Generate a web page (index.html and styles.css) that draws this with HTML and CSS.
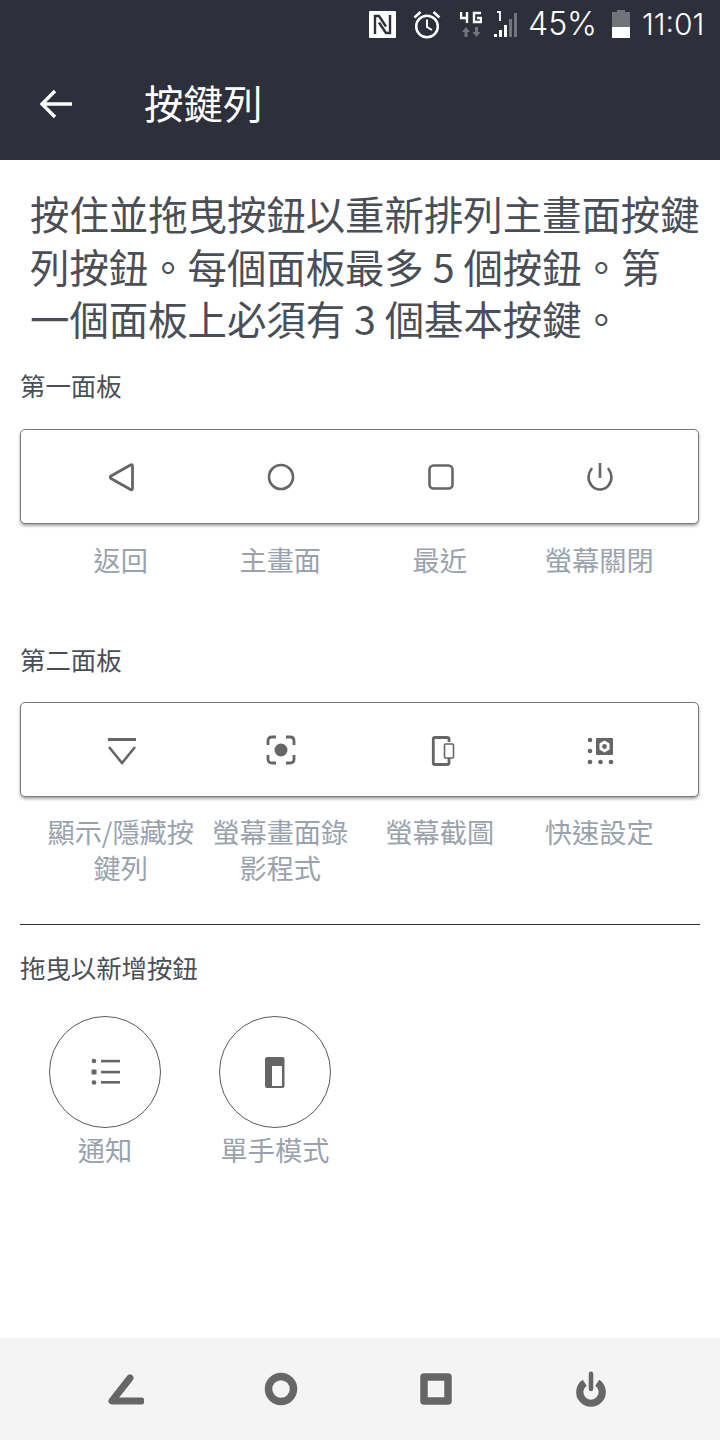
FILE: index.html
```html
<!DOCTYPE html>
<html lang="zh-Hant">
<head>
<meta charset="utf-8">
<title>按鍵列</title>
<link rel="stylesheet" href="styles.css">
</head>
<body>
<div class="screen">
  <header class="appbar">
    <div class="status">
      <svg class="s-nfc" viewBox="0 0 27 27" fill="none" stroke="#2d303a" stroke-width="2.400"><rect width="27" height="27" rx="1" fill="#fff" stroke="none"/><path d="M6 23 V5 H10 L17 15.500"/><path d="M21 4 V22 H17 L10 11.500"/></svg>
      <svg class="s-alarm" viewBox="0 0 28 29" fill="none" stroke="#fff"><circle cx="14" cy="16.500" r="10.800" stroke-width="2.500"/><path d="M14 9.500 V17 L19 20" stroke-width="2"/><path d="M1.500 7.500 L7.500 2 M26.500 7.500 L20.500 2" stroke-width="2.500"/></svg>
      <svg class="s-net" viewBox="0 0 22 27"><path d="M1 1 V7 H7 M7 1 V12 M21 2 H14 V11 H21 V7 H17" fill="none" stroke="#fff" stroke-width="2.400"/><path d="M6 16 L10 21 H7.500 V26 H4.500 V21 H2 Z M16.500 26 L12.500 21 H15 V16 H18 V21 H20.500 Z" fill="#71747b"/></svg>
      <svg class="s-signal" viewBox="0 0 23 26"><path d="M3 1 H6 V10" fill="none" stroke="#fff" stroke-width="1.800"/><rect x="0" y="23" width="3" height="3" fill="#fff"/><rect x="5" y="19" width="3" height="7" fill="#fff"/><rect x="10" y="14" width="3" height="12" fill="#fff"/><rect x="15" y="8" width="3" height="18" fill="#71747b"/><rect x="20" y="2" width="3" height="24" fill="#71747b"/></svg>
      <span class="s-text s-pct">45%</span>
      <svg class="s-batt" viewBox="0 0 18 28"><path d="M5 0 H13 V2 H18 V17 H0 V2 H5 Z" fill="#71747b"/><rect y="17" width="18" height="11" fill="#fff"/></svg>
      <span class="s-text s-time">11:01</span>
    </div>
    <div class="toolbar">
      <svg class="back" viewBox="0 0 34 30" fill="none" stroke="#fff" stroke-width="3.400"><path d="M33 15 H3 M16 2 L3 15 L16 28"/></svg>
      <h1 class="title">按鍵列</h1>
    </div>
  </header>

  <main class="content">
    <p class="intro">按住並拖曳按鈕以重新排列主畫面按鍵<br>列按鈕。每個面板最多 5 個按鈕。第<br>一個面板上必須有 3 個基本按鍵。</p>

    <h2 class="section-label">第一面板</h2>
    <div class="panel">
      <svg class="icon" viewBox="0 0 32 32" fill="none" stroke="#666" stroke-width="2.800" stroke-linejoin="round"><path d="M26.500 5 Q26.500 3 24.500 4 L5 15 Q3.500 16 5 17.500 L24.500 28.500 Q26.500 29.500 26.500 27 Z"/></svg>
      <svg class="icon" viewBox="0 0 32 32" fill="none" stroke="#666" stroke-width="2.600"><circle cx="16" cy="16" r="12"/></svg>
      <svg class="icon" viewBox="0 0 32 32" fill="none" stroke="#666" stroke-width="2.600"><rect x="4.500" y="4.500" width="23" height="23" rx="4"/></svg>
      <svg class="icon" viewBox="0 0 32 32" fill="none" stroke="#666" stroke-width="2.600"><path d="M16 2 V17"/><path d="M7.500 8 A13 13 0 0 0 4.500 16 A11.500 12.500 0 0 0 16 28.500 A11.500 12.500 0 0 0 27.500 16 A13 13 0 0 0 24.500 8" stroke-linecap="round"/></svg>
    </div>
    <div class="captions">
      <span class="caption">返回</span>
      <span class="caption">主畫面</span>
      <span class="caption">最近</span>
      <span class="caption">螢幕關閉</span>
    </div>

    <h2 class="section-label second">第二面板</h2>
    <div class="panel">
      <svg class="icon" viewBox="0 0 32 32" fill="none" stroke="#666"><path d="M2 5.500 H30" stroke-width="3"/><path d="M3 13 L16 29 L29 13" stroke-width="2.600"/></svg>
      <svg class="icon" viewBox="0 0 32 32" fill="none" stroke="#666" stroke-width="2.800"><path d="M3 11 V7 Q3 3 7 3 H11 M21 3 H25 Q29 3 29 7 V11 M29 21 V25 Q29 29 25 29 H21 M11 29 H7 Q3 29 3 25 V21"/><circle cx="16" cy="16" r="6.500" fill="#666" stroke="none"/></svg>
      <svg class="icon" viewBox="0 0 32 32" fill="none" stroke="#666"><path d="M24 8 V5 Q24 3.500 22 3.500 H10 Q8.300 3.500 8.300 5 V29 Q8.300 30.500 10 30.500 H22 Q24 30.500 24 29 V24" stroke-width="2.800"/><rect x="19.500" y="10" width="9" height="14" rx="1" stroke-width="1.600"/></svg>
      <svg class="icon" viewBox="0 0 32 32"><g fill="#666"><circle cx="6" cy="6" r="2.300"/><circle cx="6" cy="17" r="2.300"/><circle cx="6" cy="28" r="2.300"/><circle cx="16.500" cy="28" r="2.300"/><circle cx="27" cy="28" r="2.300"/><rect x="12" y="4" width="17" height="17" rx="1"/></g><path fill="#fff" d="M20.500 6.500 L25.500 9.500 V15.500 L20.500 18.500 L15.500 15.500 V9.500 Z"/><circle cx="20.500" cy="12.500" r="2.400" fill="#666"/></svg>
    </div>
    <div class="captions captions-tight">
      <span class="caption">顯示/隱藏按鍵列</span>
      <span class="caption">螢幕畫面錄影程式</span>
      <span class="caption">螢幕截圖</span>
      <span class="caption">快速設定</span>
    </div>

    <hr class="divider">

    <h2 class="section-label tray-label">拖曳以新增按鈕</h2>
    <div class="tray">
      <div class="tray-item">
        <div class="circle">
          <svg class="icon" viewBox="0 0 32 32"><g fill="#666"><circle cx="5" cy="5" r="2.300"/><rect x="2.500" y="13.500" width="5" height="5"/><circle cx="5" cy="26.500" r="2.300"/><rect x="12" y="3.800" width="19" height="2.600"/><rect x="12" y="14.800" width="19" height="2.600"/><rect x="12" y="25" width="19" height="2.600"/></g></svg>
        </div>
        <span class="caption">通知</span>
      </div>
      <div class="tray-item">
        <div class="circle">
          <svg class="icon" viewBox="0 0 32 32"><path fill="#666" fill-rule="evenodd" d="M8 1 H23.500 Q25.500 1 25.500 3 V30 Q25.500 32 23.500 32 H8 Q6 32 6 30 V3 Q6 1 8 1 Z M13 10 V30 H23 V10 Z"/></svg>
        </div>
        <span class="caption">單手模式</span>
      </div>
    </div>
  </main>

  <footer class="navbar">
    <svg class="nav-icon" viewBox="0 0 36 32" fill="none" stroke="#666" stroke-width="7" stroke-linecap="round" stroke-linejoin="round"><path d="M22 5 L4 28 H33" /></svg>
    <svg class="nav-icon" viewBox="0 0 36 36" fill="none" stroke="#666" stroke-width="7.500"><circle cx="18" cy="18" r="12.500"/></svg>
    <svg class="nav-icon" viewBox="0 0 36 36" fill="none" stroke="#666" stroke-width="7.500" stroke-linejoin="round"><rect x="6" y="6" width="24" height="24"/></svg>
    <svg class="nav-icon" viewBox="0 0 36 40" fill="none" stroke="#666"><path d="M11 13 A12.500 12.500 0 1 0 25 13" stroke-width="8"/><path d="M18 3 V20" stroke-width="5" stroke-linecap="round"/></svg>
  </footer>
</div>
</body>
</html>
```
FILE: styles.css
```css
* { box-sizing: border-box; }
html, body { margin: 0; padding: 0; }
body {
  background: #fff;
  font-family: "Noto Sans CJK TC", "Noto Sans", sans-serif;
  color: #4a4f57;
}
.screen {
  width: 720px;
  height: 1440px;
  display: flex;
  flex-direction: column;
  overflow: hidden;
}
.appbar {
  height: 160px;
  background: #2d303a;
  color: #fff;
  flex: none;
}
.status {
  height: 48px;
  display: flex;
  align-items: center;
  justify-content: flex-end;
  padding-right: 15px;
}
.s-nfc { width: 27px; height: 27px; margin-right: 17px; }
.s-alarm { width: 28px; height: 29px; margin-right: 19px; }
.s-net { width: 22px; height: 27px; margin-right: 12px; }
.s-signal { width: 23px; height: 26px; margin-right: 11px; }
.s-batt { width: 18px; height: 28px; margin: 0 12px 0 16px; }
.s-text {
  font-family: "Inter", sans-serif;
  font-weight: 300;
  font-size: 30px;
  line-height: 50px;
  color: #fff;
  white-space: nowrap;
}
.s-pct { width: 68px; font-size: 32px; }
.s-time { width: 63px; }
.toolbar {
  height: 112px;
  display: flex;
  align-items: center;
  padding-left: 39px;
}
.back { width: 34px; height: 30px; margin-right: 71px; }
.title {
  margin: 0 0 4px;
  font-size: 39.500px;
  font-weight: 400;
  line-height: 108px;
}
.content {
  flex: 1;
  padding: 27px 20px 0;
}
.intro {
  margin: 0;
  padding: 0 0 0 10px;
  font-size: 39.400px;
  line-height: 52.500px;
  color: #4a4f57;
  height: 181px;
  white-space: nowrap;
}
.section-label {
  margin: 0 0 27px;
  font-size: 25.400px;
  font-weight: 400;
  line-height: 34px;
  color: #4a4f57;
}
.second { margin: 65px 0 26px; }
.tray-label { margin-bottom: 0; }
.panel {
  width: 679px;
  height: 95px;
  display: grid;
  grid-template-columns: repeat(4, 159.500px);
  padding-left: 21px;
  justify-items: center;
  align-items: center;
  background: #fff;
  border: 1px solid #77797c;
  border-radius: 5px;
  box-shadow: 0 2px 3px rgba(0,0,0,.35);
}
.icon { width: 32px; height: 32px; display: block; }
.captions {
  width: 679px;
  margin-top: 17px;
  display: grid;
  grid-template-columns: repeat(4, 159.500px);
  padding-left: 21px;
}
.captions-tight { margin-top: 16px; }
.caption {
  font-size: 27.200px;
  line-height: 36px;
  color: #9aa3ad;
  text-align: center;
}
.divider {
  margin: 39px 0 25px;
  border: 0;
  height: 1px;
  background: #333;
  width: 680px;
}
.tray {
  display: flex;
  padding-top: 32px;
  padding-left: 29px;
  gap: 58px;
}
.tray-item {
  display: flex;
  flex-direction: column;
  align-items: center;
  width: 112px;
  gap: 3px;
  white-space: nowrap;
}
.circle {
  width: 112px;
  height: 112px;
  border: 1.500px solid #5a5a5a;
  border-radius: 50%;
  display: flex;
  align-items: center;
  justify-content: center;
}
.navbar {
  height: 102px;
  flex: none;
  background: #f4f4f4;
  display: grid;
  grid-template-columns: repeat(4, 155px);
  justify-content: center;
  justify-items: center;
  align-items: center;
  padding-right: 4px;
}
.nav-icon { width: 36px; height: 36px; }
```
